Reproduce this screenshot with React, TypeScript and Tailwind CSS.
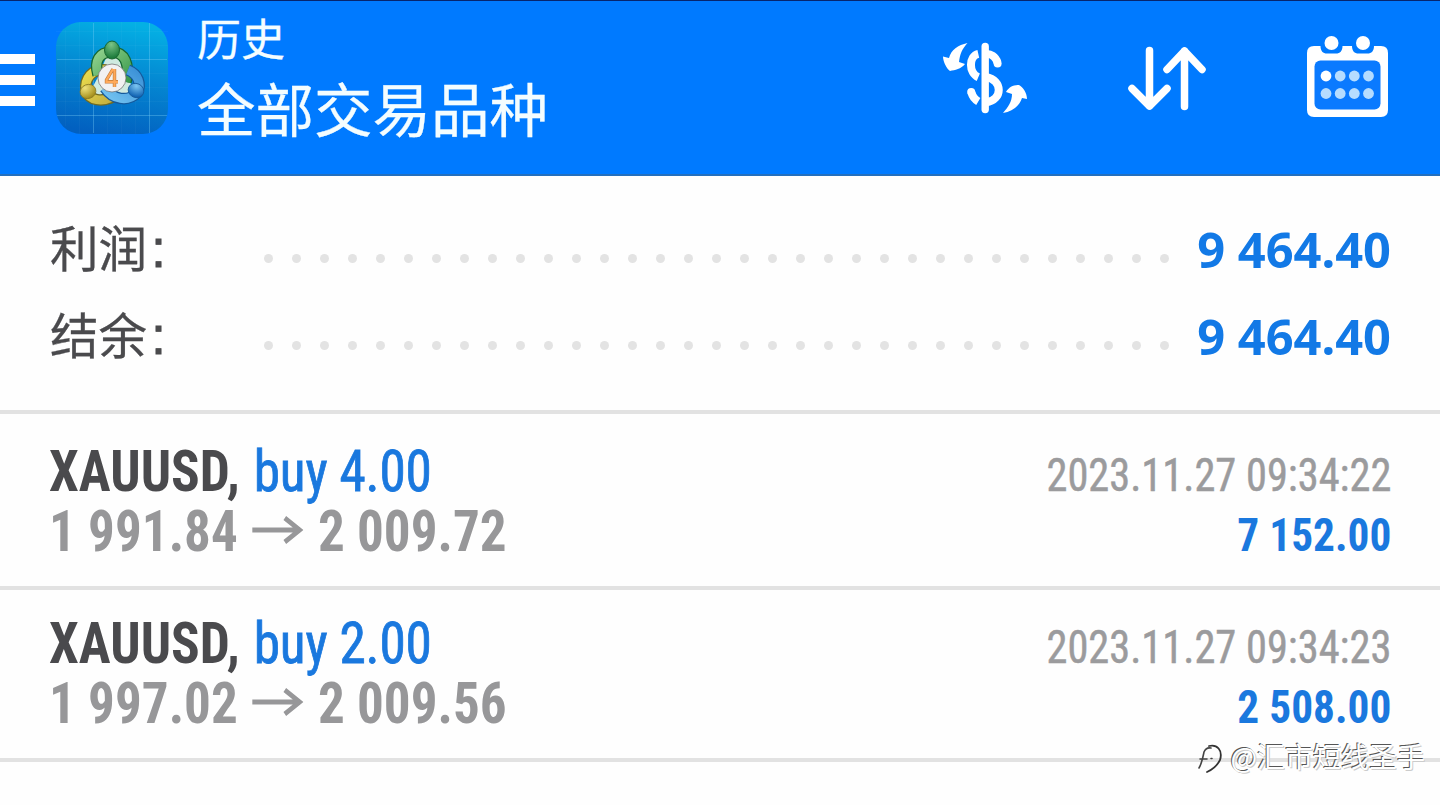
import React from "react";

const condensed = "font-['Roboto_Condensed',Roboto,sans-serif] [font-stretch:75%]";
const cjk = "font-['Noto_Sans_CJK_SC',sans-serif]";

function AppLogo() {
  return (
    <svg viewBox="0 0 112 112" className="h-28 w-28 shrink-0">
      <defs>
        <linearGradient id="tile" x1="0.6" y1="0" x2="0.4" y2="1">
          <stop offset="0" stopColor="#04b0e4" />
          <stop offset="0.45" stopColor="#0488d2" />
          <stop offset="1" stopColor="#0260c0" />
        </linearGradient>
        <linearGradient id="green" x1="0" y1="0" x2="1" y2="1">
          <stop offset="0" stopColor="#8fd08c" />
          <stop offset="1" stopColor="#3a9a4c" />
        </linearGradient>
        <linearGradient id="yellow" x1="0" y1="0" x2="1" y2="1">
          <stop offset="0" stopColor="#eadb4c" />
          <stop offset="1" stopColor="#c4b040" />
        </linearGradient>
        <linearGradient id="blue" x1="1" y1="0" x2="0" y2="1">
          <stop offset="0" stopColor="#3a90d6" />
          <stop offset="1" stopColor="#74c4f2" />
        </linearGradient>
        <radialGradient id="greenHead" cx="0.45" cy="0.2" r="0.8">
          <stop offset="0" stopColor="#7cc487" />
          <stop offset="1" stopColor="#147535" />
        </radialGradient>
        <radialGradient id="yellowHead" cx="0.4" cy="0.2" r="0.8">
          <stop offset="0" stopColor="#f0e27a" />
          <stop offset="1" stopColor="#a08a18" />
        </radialGradient>
        <radialGradient id="blueHead" cx="0.4" cy="0.2" r="0.8">
          <stop offset="0" stopColor="#7cc6f2" />
          <stop offset="1" stopColor="#0a5cae" />
        </radialGradient>
      </defs>
      <rect width="112" height="112" rx="25" fill="url(#tile)" />
      <path d="M37.500 1V111M93.500 1V111M1 37.500H111M1 93.500H111" stroke="#7fd0f5" strokeOpacity="0.35" />
      <path d="M9.500 8V104M23.500 0V112M51.500 0V112M65.500 0V112M79.500 0V112M0 9.500H112M0 23.500H112M0 51.500H112M0 65.500H112M0 79.500H112" stroke="#fff" strokeOpacity="0.03" />
      <path d="M42 55L50 36H62L72 55L78 70L56 78L34 70Z" fill="#cfeae0" />
      <g fill="none">
        <path d="M50 48C36 46 28 57 30 69C34 79 46 80 57 75" stroke="#6f6a22" strokeWidth="11.500" />
        <path d="M50 48C36 46 28 57 30 69C34 79 46 80 57 75" stroke="url(#yellow)" strokeWidth="9" />
        <path d="M42 53C38 39 43 30 56 30C69 30 74 42 70 60" stroke="#17662f" strokeWidth="11.500" />
        <path d="M42 53C38 39 43 30 56 30C69 30 74 42 70 60" stroke="url(#green)" strokeWidth="9" />
        <path d="M72 48C82 52 86 62 81 71C72 80 57 78 49 66" stroke="#15599b" strokeWidth="11.500" />
        <path d="M72 48C82 52 86 62 81 71C72 80 57 78 49 66" stroke="url(#blue)" strokeWidth="9" />
      </g>
      <ellipse cx="56" cy="28" rx="7.500" ry="9" fill="url(#greenHead)" stroke="#17662f" />
      <ellipse cx="32" cy="69.500" rx="8" ry="7" transform="rotate(-20 32 69.500)" fill="url(#yellowHead)" stroke="#8a7a24" strokeWidth="0.800" />
      <ellipse cx="80" cy="68.500" rx="8" ry="7" transform="rotate(25 80 68.500)" fill="url(#blueHead)" stroke="#155999" strokeWidth="0.800" />
      <circle cx="56" cy="56" r="14" fill="#f2f1f2" stroke="#666" strokeWidth="0.700" />
      <path d="M57 47L50.500 58V59.800H62M58.500 47V65" fill="none" stroke="#c07a3a" strokeWidth="3.400" />
      <path d="M57 47L50.500 58V59.800H62M58.500 47V65" fill="none" stroke="#ffa95a" strokeWidth="2.200" />
    </svg>
  );
}

function CurrencyIcon() {
  return (
    <svg viewBox="0 0 86 74" className="h-[74px] w-[86px]" fill="none">
      <path d="M42.200 4.500V67.500" stroke="#fff" strokeWidth="7.400" strokeLinecap="round" />
      <path d="M54.500 20.500C52.500 14.500 47.500 11.500 43 12M35.300 11.800C25.500 14 25.500 31 35.300 35.200M43 35C60 38 60 58 43 60.500M28.500 50.500C29.500 54.500 32 57.500 35.300 59.500" stroke="#fff" strokeWidth="8" />
      <circle cx="54.600" cy="21.500" r="4" fill="#fff" />
      <circle cx="28.200" cy="50" r="4" fill="#fff" />
      <path d="M24.500 1C15 3 8 8 6 16L0 14.500C0 20 4 27 7 29C12 28 18 27 22 22L16 20C17 12 19 7 24.500 1Z" fill="#fff" />
      <path d="M60 71C69 69 76 65 79 56L84 57C84 51 80 45 76 43C70 43 66 45 63 50L69 52C69 60 65 65 60 71Z" fill="#fff" />
    </svg>
  );
}

function SortIcon() {
  return (
    <svg viewBox="0 0 80 66" className="h-[66px] w-20" fill="none" stroke="#fff" strokeWidth="7.500" strokeLinecap="round" strokeLinejoin="round">
      <path d="M22.500 5.500V61M5 43.500L22.500 61L40 43.500M57.500 61.500V6M40 24.500L57.500 6L75 24.500" />
    </svg>
  );
}

function CalendarIcon() {
  return (
    <svg viewBox="0 0 82 82" className="h-[82px] w-[82px]">
      <path d="M7 10H13.500C13.500 15 16 17.500 20 17.500H29C33 17.500 35.500 15 35.500 10H45C45 15 47.500 17.500 51.500 17.500H60.500C64.500 17.500 67 15 67 10H74Q81 10 81 17V74Q81 81 74 81H7Q0 81 0 74V17Q0 10 7 10Z" fill="#fff" />
      <rect x="7.500" y="24.500" width="66" height="49" rx="6" fill="#0a7aff" />
      <circle cx="24.500" cy="7" r="7" fill="#fff" />
      <circle cx="56" cy="7" r="7" fill="#fff" />
      <circle cx="19" cy="40" r="5.400" fill="#fff" />
      <g fill="#b5dcff">
        <circle cx="33.200" cy="40" r="5.400" />
        <circle cx="47.300" cy="40" r="5.400" />
        <circle cx="61.500" cy="40" r="5.400" />
        <circle cx="19" cy="57.500" r="5.400" />
        <circle cx="33.200" cy="57.500" r="5.400" />
        <circle cx="47.300" cy="57.500" r="5.400" />
        <circle cx="61.500" cy="57.500" r="5.400" />
      </g>
    </svg>
  );
}

function Header() {
  return (
    <header className="flex h-44 shrink-0 border-t border-b-2 border-t-[#06256e] border-b-[#246fbd] bg-[#007aff] text-[#f4fdff]">
      <div className="mt-[53px] flex w-[35px] flex-col gap-[11px]">
        <span className="h-2.5 bg-white" />
        <span className="h-2.5 bg-white" />
        <span className="h-2.5 bg-white" />
      </div>
      <div className="mt-[21px] ml-[21px]">
        <AppLogo />
      </div>
      <div className={`ml-[29px] pt-1.5 [-webkit-text-stroke:0.3px_#f4fdff] ${cjk}`}>
        <div className="text-[44px] leading-[60px]">历史</div>
        <div className="text-[58.500px] leading-[80px]">全部交易品种</div>
      </div>
      <div className="mt-[41px] ml-auto">
        <CurrencyIcon />
      </div>
      <div className="mt-[44px] ml-[98px]">
        <SortIcon />
      </div>
      <div className="mt-[35px] mr-[51px] ml-[100px]">
        <CalendarIcon />
      </div>
    </header>
  );
}

const DOTS = Array.from({ length: 33 }, (_, i) => i);

function SummaryRow({ label, value }: { label: string; value: string }) {
  return (
    <div className="flex h-[87px] items-center pr-[49px] pl-[50px]">
      <div className="flex w-[214px] shrink-0 pb-1.5 leading-[60px] text-[#4a4a4d]">
        <span className={`text-[48.500px] [-webkit-text-stroke:0.3px_#4a4a4d] ${cjk}`}>{label}</span>
        <span className="ml-1 pt-0.5 font-['Liberation_Sans'] text-[54px] [-webkit-text-stroke:0.8px_#4a4a4d]">:</span>
      </div>
      <div className="flex w-[905px] shrink-0 justify-between pt-[18px]">
        {DOTS.map((i) => (
          <span key={i} className="size-[9px] rounded-full bg-[#e3e3e3]" />
        ))}
      </div>
      <div className="ml-auto pb-0.5 font-['Noto_Sans'] text-[48.800px] leading-[60px] font-bold whitespace-nowrap text-[#1279e6]">{value}</div>
    </div>
  );
}

function Arrow() {
  return (
    <svg viewBox="0 0 55 28" className="mr-4 mb-1 ml-[15px] h-7 w-[55px]" fill="none" stroke="#979799" strokeWidth="4.800">
      <path d="M0 14H51M35 2L51 14L35 26" />
    </svg>
  );
}

type Deal = { volume: string; open: string; close: string; time: string; profit: string };

function DealRow({ deal }: { deal: Deal }) {
  return (
    <div className={`flex h-[172px] shrink-0 justify-between border-b-4 border-[#e2e2e2] px-[49px] pt-6 ${condensed}`}>
      <div>
        <div className="origin-left scale-x-[0.935] text-[57px] leading-[60px] whitespace-nowrap">
          <span className="font-bold text-[#4a4a4d]">XAUUSD,</span>
          <span className="ml-0.5 tracking-[-0.2px] text-[#1a78de] [-webkit-text-stroke:0.8px_#1a78de]"> buy {deal.volume}</span>
        </div>
        <div className="flex origin-left scale-x-[0.932] items-center text-[57px] leading-[60px] font-bold whitespace-nowrap text-[#979799]">
          <span>{deal.open}</span>
          <Arrow />
          <span>{deal.close}</span>
        </div>
      </div>
      <div className="pt-[3px] text-right text-[47px] leading-[60px] whitespace-nowrap">
        <div className="origin-right scale-x-[0.902] text-[#9b9b9d] [-webkit-text-stroke:0.5px_#9b9b9d]">{deal.time}</div>
        <div className="origin-right scale-x-[0.922] font-bold text-[#1a78de]">{deal.profit}</div>
      </div>
    </div>
  );
}

const DEALS: Deal[] = [
  { volume: "4.00", open: "1 991.84", close: "2 009.72", time: "2023.11.27 09:34:22", profit: "7 152.00" },
  { volume: "2.00", open: "1 997.02", close: "2 009.56", time: "2023.11.27 09:34:23", profit: "2 508.00" },
];

function Watermark() {
  return (
    <div className={`absolute top-[737px] right-[15px] flex items-center text-[28px] leading-[38px] text-white [text-shadow:-1px_-1px_0_#555,1px_1px_0_#ccc] ${cjk}`}>
      <svg viewBox="0 0 26 32" className="mt-1 mr-1.5 h-8 w-[28px]" fill="none" strokeLinecap="round">
        <path d="M1 26C4 21 5 15 6 10Q8 5 13 6M2 17H9M13 16.500H14" stroke="#444" strokeWidth="1.600" />
        <path d="M11 4C19 2 25 8 22 18Q18 26 9 30" stroke="#333" strokeWidth="1.800" />
      </svg>
      <span>@汇市短线圣手</span>
    </div>
  );
}

export default function App() {
  return (
    <main className="relative flex h-[805px] w-[1440px] flex-col overflow-hidden bg-[#fefefe]">
      <Header />
      <section className="h-[238px] shrink-0 border-b-4 border-[#e2e2e2] pt-[30px]">
        <SummaryRow label="利润" value="9 464.40" />
        <SummaryRow label="结余" value="9 464.40" />
      </section>
      <div className="h-1 shrink-0" />
      {DEALS.map((deal) => (
        <DealRow key={deal.time} deal={deal} />
      ))}
      <Watermark />
    </main>
  );
}
